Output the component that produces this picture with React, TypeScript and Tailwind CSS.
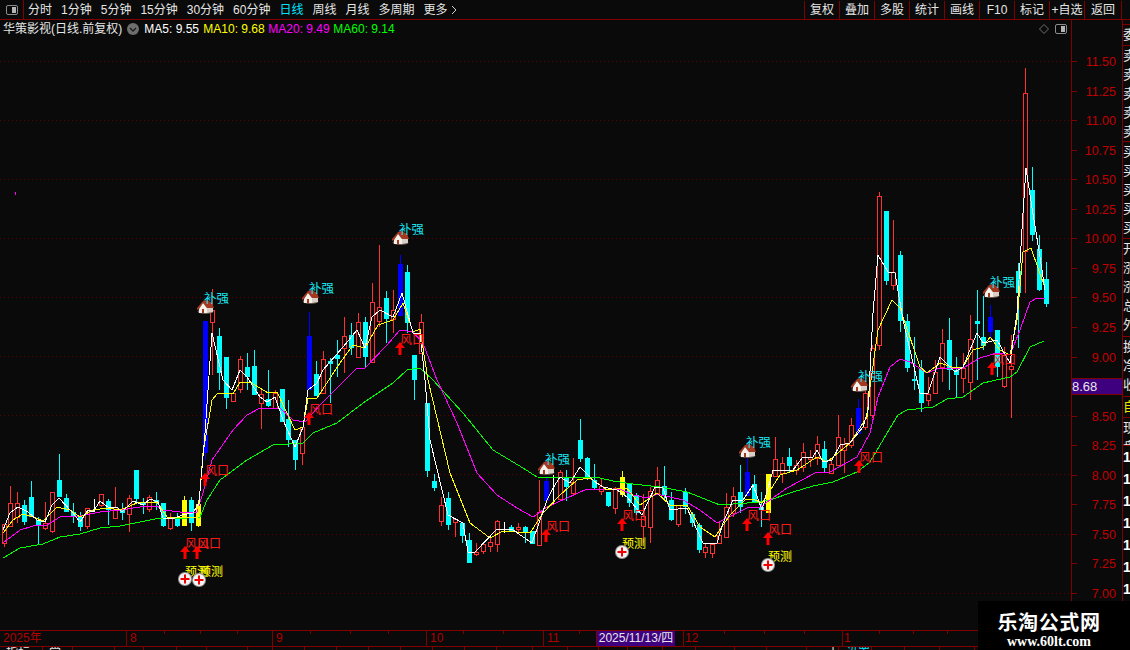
type Kind = "r" | "c" | "b" | "y" | "w"

// high, body top, body bottom, low (page pixels), one row per trading day
const candles: [number, number, number, number, Kind][] = [
  [524, 524, 543, 547, "r"], [486, 503, 526, 527, "r"], [492, 503, 517, 523, "r"], [500, 505, 522, 525, "c"],
  [481, 497, 517, 517, "c"], [517, 520, 526, 544, "c"], [502, 523, 528, 530, "r"], [492, 492, 531, 533, "r"],
  [454, 480, 497, 497, "c"], [494, 498, 512, 512, "c"], [503, 512, 517, 523, "c"], [512, 517, 527, 531, "c"],
  [508, 508, 526, 529, "r"], [499, 510, 511, 512, "w"], [494, 494, 505, 507, "r"], [499, 501, 510, 525, "c"],
  [487, 507, 518, 518, "r"], [503, 510, 513, 520, "c"], [495, 498, 514, 532, "r"], [470, 470, 499, 503, "c"],
  [498, 503, 505, 514, "c"], [495, 497, 509, 512, "r"], [492, 500, 503, 510, "c"], [503, 503, 526, 527, "c"],
  [513, 518, 528, 530, "r"], [513, 517, 526, 527, "c"], [496, 500, 526, 526, "y"], [497, 500, 523, 531, "c"],
  [500, 504, 526, 527, "y"], [321, 321, 453, 460, "b"], [289, 310, 322, 375, "r"], [328, 336, 373, 390, "c"],
  [357, 357, 398, 409, "c"], [393, 393, 401, 401, "r"], [356, 359, 389, 393, "r"], [353, 367, 377, 390, "c"],
  [350, 366, 395, 395, "c"], [390, 394, 403, 429, "r"], [370, 399, 406, 407, "c"], [390, 393, 408, 408, "r"],
  [389, 389, 422, 422, "c"], [400, 419, 440, 447, "c"], [440, 440, 460, 470, "c"], [427, 427, 453, 465, "r"],
  [312, 336, 390, 390, "b"], [361, 374, 396, 396, "c"], [351, 359, 393, 393, "r"], [358, 361, 364, 403, "c"],
  [340, 355, 359, 377, "c"], [317, 336, 348, 373, "r"], [323, 335, 348, 355, "c"], [313, 322, 357, 357, "r"],
  [317, 322, 357, 368, "c"], [283, 302, 362, 362, "r"], [245, 307, 321, 327, "r"], [291, 298, 319, 343, "c"],
  [290, 310, 319, 333, "r"], [255, 264, 316, 316, "b"], [265, 272, 323, 333, "c"], [355, 355, 380, 400, "c"],
  [314, 322, 353, 353, "r"], [403, 403, 471, 477, "c"], [474, 481, 488, 491, "c"], [497, 505, 521, 526, "r"],
  [492, 498, 525, 530, "c"], [518, 519, 522, 537, "r"], [523, 523, 536, 543, "c"], [533, 540, 563, 563, "c"],
  [543, 552, 554, 556, "r"], [544, 544, 551, 554, "r"], [538, 542, 546, 552, "r"], [520, 521, 544, 552, "r"],
  [522, 530, 531, 533, "w"], [525, 527, 531, 532, "c"], [523, 527, 529, 533, "r"], [526, 527, 533, 543, "c"],
  [531, 531, 544, 544, "c"], [480, 512, 545, 545, "r"], [478, 481, 501, 501, "b"], [475, 500, 501, 505, "w"],
  [470, 472, 499, 500, "r"], [470, 478, 487, 501, "c"], [458, 482, 493, 495, "r"], [419, 440, 459, 462, "c"],
  [457, 458, 478, 480, "c"], [464, 480, 488, 489, "c"], [478, 486, 491, 495, "r"], [492, 492, 506, 507, "c"],
  [487, 488, 508, 514, "r"], [471, 477, 495, 497, "y"], [483, 483, 503, 507, "c"], [493, 495, 513, 515, "c"],
  [494, 516, 526, 543, "r"], [487, 491, 527, 543, "r"], [467, 480, 493, 495, "r"], [466, 486, 495, 500, "c"],
  [492, 500, 520, 521, "c"], [505, 505, 524, 527, "r"], [488, 492, 507, 514, "c"], [512, 514, 523, 527, "c"],
  [523, 525, 550, 553, "c"], [543, 547, 552, 558, "r"], [544, 544, 553, 558, "r"], [522, 535, 543, 543, "r"],
  [493, 507, 537, 537, "r"], [487, 496, 513, 517, "r"], [465, 492, 507, 513, "c"], [458, 472, 496, 496, "b"],
  [475, 484, 502, 502, "c"], [492, 507, 510, 527, "c"], [474, 474, 513, 513, "y"], [437, 459, 476, 476, "r"],
  [457, 463, 473, 483, "r"], [448, 457, 466, 473, "c"], [460, 465, 470, 475, "r"], [443, 452, 467, 472, "r"],
  [450, 457, 459, 467, "r"], [436, 444, 458, 465, "r"], [441, 449, 468, 473, "c"], [458, 464, 473, 473, "r"],
  [415, 437, 465, 465, "r"], [438, 444, 450, 473, "r"], [418, 425, 445, 448, "r"], [399, 408, 434, 434, "b"],
  [388, 393, 427, 430, "r"], [345, 348, 415, 418, "r"], [192, 196, 345, 350, "r"], [211, 211, 281, 285, "c"],
  [220, 272, 285, 290, "r"], [251, 255, 321, 332, "c"], [314, 321, 368, 372, "c"], [337, 379, 381, 390, "c"],
  [360, 369, 403, 412, "c"], [377, 394, 400, 406, "r"], [360, 372, 393, 393, "r"], [329, 343, 367, 382, "r"],
  [318, 340, 370, 390, "c"], [357, 370, 375, 397, "c"], [353, 368, 378, 393, "r"], [315, 339, 382, 400, "r"],
  [290, 321, 324, 380, "c"], [296, 337, 346, 350, "c"], [305, 317, 332, 337, "b"], [330, 330, 367, 377, "c"],
  [347, 355, 386, 388, "r"], [335, 366, 369, 418, "r"], [263, 271, 293, 348, "c"], [68, 93, 251, 293, "r"],
  [167, 190, 235, 241, "c"], [235, 249, 290, 291, "c"], [262, 279, 304, 307, "c"],
]

const ma60 =
  "3,558 20,548 43,544 60,537 80,534 100,528 120,526 140,522 160,518 187,518 200,517 207,500 220,480 247,460 273,445 303,443 313,433 337,423 363,403 393,383 407,370 420,368 433,380 463,413 493,450 523,468 537,477 600,478 613,481 633,484 660,487 687,492 720,505 760,502 770,500 793,492 813,486 833,482 857,472 870,462 883,440 898,415 907,410 933,407 947,399 963,397 983,383 1010,377 1017,372 1030,347 1044,341"
const ma20 =
  "3,543 20,530 33,526 47,525 60,517 80,516 100,512 120,510 140,507 157,506 163,510 180,512 197,512 203,493 212,460 233,430 247,415 260,408 280,408 293,420 305,422 320,405 343,382 357,368 365,368 387,345 400,330 413,332 423,343 437,380 457,423 477,473 497,495 517,508 533,517 547,507 567,498 587,489 603,489 620,489 633,495 647,498 657,494 683,500 700,510 717,523 733,515 747,508 760,507 770,500 787,488 817,472 830,472 857,457 870,433 878,397 890,367 900,359 910,362 927,373 940,368 963,368 980,358 997,353 1010,355 1020,330 1030,302 1037,298 1045,299"
const ma10 =
  "3,533 13,520 23,514 33,517 43,521 57,507 70,510 80,517 93,510 107,508 120,510 137,503 157,502 167,517 180,517 198,517 203,453 212,400 218,393 233,394 240,382 250,382 268,393 277,392 295,430 303,427 308,398 317,398 340,363 353,345 365,348 378,325 393,320 403,303 413,332 420,329 428,380 450,473 470,523 490,538 503,531 530,533 543,513 560,495 577,480 590,478 607,490 627,488 640,505 657,493 670,505 687,505 700,527 715,537 730,515 745,500 753,499 762,503 780,475 797,470 817,457 827,462 850,443 867,417 870,387 878,330 892,300 900,308 920,367 927,373 940,363 955,368 963,367 973,350 983,347 990,337 1000,350 1010,355 1017,320 1023,252 1031,248 1045,288"
const ma5 =
  "3,530 10,513 18,507 28,512 37,520 45,522 52,505 59,498 72,512 80,522 88,510 93,512 100,501 108,507 117,507 122,512 133,501 143,505 150,499 158,502 163,518 175,518 182,515 193,513 199,503 205,433 212,333 223,380 232,390 240,370 247,377 260,397 267,402 275,397 283,420 295,447 303,427 308,390 317,383 323,370 343,347 357,330 365,348 372,317 380,310 393,317 402,293 413,333 420,333 425,380 430,440 448,515 463,523 468,552 475,552 497,529 513,530 532,543 547,500 553,488 560,477 570,483 580,467 595,482 603,487 617,490 627,497 642,515 655,487 663,488 670,510 687,508 703,543 717,543 723,523 733,500 743,500 753,485 762,510 773,470 793,470 803,457 813,457 817,450 823,462 832,460 840,445 850,443 863,427 868,410 873,313 878,255 888,272 895,273 903,320 920,393 928,393 940,357 955,372 963,367 977,333 983,343 997,340 1010,363 1017,313 1023,213 1026,168 1030,195 1040,257 1045,290"

const grid = [61, 120, 179, 238, 297, 356, 415, 474, 534, 593]
const prices = ["11.50", "11.25", "11.00", "10.75", "10.50", "10.25", "10.00", "9.75", "9.50", "9.25", "9.00", "8.75", "8.50", "8.25", "8.00", "7.75", "7.50", "7.25", "7.00"]

const houses = [[204, 299], [309, 289], [399, 230], [545, 460], [746, 443], [858, 377], [990, 283]]
const winds = [[185, 544], [197, 544], [205, 471], [309, 410], [400, 340], [546, 527], [622, 516], [747, 516], [768, 530], [859, 458], [992, 360]]
const forecasts = [[185, 572, 579], [199, 572, 580], [622, 544, 552], [768, 557, 565]]

const candleColor: Record<Kind, string> = { r: "#ff3030", c: "#00ffff", b: "#0000ff", y: "#ffff00", w: "#ffffff" }

function Candle({ i, d }: { i: number; d: [number, number, number, number, Kind] }) {
  const [high, top, bot, low, kind] = d
  const x = Math.round(3.5 + 6.95 * i)
  const color = candleColor[kind]
  if (kind === "r") {
    return (
      <g stroke={color} fill="none">
        <line x1={x + 0.5} x2={x + 0.5} y1={high} y2={top} />
        <line x1={x + 0.5} x2={x + 0.5} y1={bot} y2={low} />
        <rect x={x - 1.5} y={top + 0.5} width={4} height={Math.max(bot - top, 1)} />
      </g>
    )
  }
  return (
    <g>
      <line x1={x + 0.5} x2={x + 0.5} y1={high} y2={low} stroke={color} />
      {kind !== "w" && <rect x={x - 2} y={top} width={5} height={Math.max(bot - top, 2)} fill={color} />}
    </g>
  )
}

function House({ x, y }: { x: number; y: number }) {
  return (
    <g transform={`translate(${x - 8} ${y - 7})`}>
      <ellipse cx="8.5" cy="11.5" rx="8" ry="2.5" fill="#6b5a50" />
      <polygon points="0,8 6,1 10,0 15,3 17,8 10,8 6,3 2,9 0,10" fill="#a5381f" />
      <polygon points="2,9 6,3 10,8 10,13 2,13" fill="#f5f0ea" />
      <polygon points="10,8 16,8 16,12 10,13" fill="#d9cfc4" />
      <rect x="5" y="9" width="2" height="4" fill="#a5381f" />
    </g>
  )
}

function Plus({ x, y }: { x: number; y: number }) {
  return (
    <g>
      <circle cx={x} cy={y} r="7" fill="#9a9a9a" />
      <circle cx={x} cy={y} r="6" fill="#f4f4f4" />
      <rect x={x - 4.5} y={y - 1} width="9" height="2" fill="#f00000" />
      <rect x={x - 1} y={y - 4.5} width="2" height="9" fill="#f00000" />
    </g>
  )
}

function Arrow({ x, y }: { x: number; y: number }) {
  return <polygon points={`${x},${y} ${x + 5},${y + 6} ${x + 1.5},${y + 6} ${x + 1.5},${y + 13} ${x - 1.5},${y + 13} ${x - 1.5},${y + 6} ${x - 5},${y + 6}`} fill="#ff0000" />
}

function PanelIcon() {
  return (
    <svg width="12" height="10" viewBox="0 0 12 10">
      <rect x="0.5" y="0.5" width="11" height="9" rx="1.5" fill="none" stroke="#8c8c8c" />
      <rect x="6" y="2" width="4" height="6" fill="#b4b4b4" />
    </svg>
  )
}

function Chart() {
  return (
    <svg width="1071" height="610" viewBox="0 20 1071 610" className="block">
      {grid.map((y) => (
        <line key={y} x1="0" x2="1071" y1={y + 0.5} y2={y + 0.5} stroke="#5c0000" strokeDasharray="1 3" />
      ))}
      <rect x="15" y="192" width="1" height="3" fill="#ff00ff" />
      <g shapeRendering="crispEdges">
        {candles.map((d, i) => (
          <Candle key={i} i={i} d={d} />
        ))}
        <polyline points={ma60} fill="none" stroke="#00ff00" />
        <polyline points={ma20} fill="none" stroke="#ff00ff" />
        <polyline points={ma10} fill="none" stroke="#ffff00" />
        <polyline points={ma5} fill="none" stroke="#ffffff" />
      </g>
      {winds.map(([x, y]) => (
        <g key={`${x}-${y}`}>
          <text x={x} y={y + 4} fontSize="12" fill="#ff1a1a">风口</text>
          <Arrow x={x} y={y + 2} />
        </g>
      ))}
      {houses.map(([x, y]) => (
        <g key={x}>
          <House x={x + 1} y={y + 8} />
          <text x={x} y={y + 4} fontSize="12.5" fill="#19e6f0">补强</text>
        </g>
      ))}
      {forecasts.map(([x, ty, cy]) => (
        <g key={x}>
          <text x={x} y={ty + 4} fontSize="12" fill="#ffff00">预测</text>
          <Plus x={x} y={cy} />
        </g>
      ))}
    </svg>
  )
}

function Axis() {
  return (
    <svg width="50" height="610" viewBox="1072 20 50 610" className="block">
      {prices.map((p, i) => {
        const y = Math.round(61 + 29.55 * i)
        return (
          <g key={p}>
            <line x1="1072" x2="1077" y1={y + 0.5} y2={y + 0.5} stroke="#800000" />
            <text x="1116" y={y + 5} textAnchor="end" fontSize="12.5" fill="#c00000">{p}</text>
          </g>
        )
      })}
    </svg>
  )
}

const navItems = ["分时", "1分钟", "5分钟", "15分钟", "30分钟", "60分钟", "日线", "周线", "月线", "多周期", "更多"]
const toolButtons = ["复权", "叠加", "多股", "统计", "画线", "F10", "标记", "+自选"]

const stripSections: { h: string; rows: string[]; color?: string }[] = [
  { h: "h-[21px]", rows: ["委"] },
  { h: "h-[96px]", rows: ["卖", "卖", "卖", "卖", "卖"] },
  { h: "h-[97px]", rows: ["买", "买", "买", "买", "买"] },
  { h: "h-[98px]", rows: ["开", "涨", "涨", "总", "外"] },
  { h: "h-[60px]", rows: ["换", "净", "收"] },
  { h: "h-[21px]", rows: ["自"], color: "text-[#e6e600]" },
  { h: "h-[28px]", rows: ["现", "盘"] },
]

const monthCells = [
  { w: "w-[127px]", label: "2025年" },
  { w: "w-[146px]", label: "8" },
  { w: "w-[154px]", label: "9" },
  { w: "w-[117px]", label: "10" },
  { w: "w-[53px]", label: "11" },
]
const axisTicks = [164, 200, 237, 310, 350, 388, 463, 503, 579, 724, 764, 804, 879, 913, 947]

// right edge of each cut-off tab along the very bottom of the window
const footerEdges = [43, 73, 115, 144, 177, 207, 248, 273, 305, 337, 369, 401, 433, 465, 497, 533, 568, 599, 628, 663, 696, 735, 767, 807, 839, 872, 905, 940, 975]

export default function App() {
  return (
    <div className="relative flex h-[650px] w-[1130px] flex-col overflow-hidden bg-[#0a0a0a] font-['Liberation_Sans','Noto_Sans_CJK_SC',sans-serif] text-[12px] text-[#e6e6e6]">
      {/* top toolbar */}
      <div className="flex h-[20px] shrink-0 items-center border-b border-[#800000] pt-px leading-[19px]">
        <div className="-mt-px flex h-[19px] w-[24px] items-center justify-center border-r border-[#800000]">
          <PanelIcon />
        </div>
        <div className="ml-[4px] flex gap-[9px]">
          {navItems.map((item) => (
            <span key={item} className={item === "日线" ? "text-[#00e5ff]" : ""}>{item}</span>
          ))}
        </div>
        <svg width="6" height="10" viewBox="0 0 6 10" className="ml-[3px]">
          <path d="M1 1l4 4-4 4" fill="none" stroke="#d0d0d0" />
        </svg>
        <div className="-mt-px mr-[8px] ml-auto flex h-[19px] pt-px">
          {toolButtons.map((b) => (
            <div key={b} className="flex w-[35px] items-center justify-center border-l border-[#800000] whitespace-nowrap">{b}</div>
          ))}
          <div className="flex w-[38px] items-center justify-center border-x border-[#800000]">返回</div>
        </div>
      </div>

      {/* chart, price axis, quote strip */}
      <div className="flex h-[610px] shrink-0">
        <div className="relative w-[1071px]">
          <Chart />
          <div className="absolute inset-x-0 top-0 flex h-[18px] items-center pl-[3px] whitespace-nowrap">
            <span>华策影视(日线.前复权)</span>
            <span className="ml-[5px] flex h-[12px] w-[12px] items-center justify-center rounded-full bg-[#6e6e6e]">
              <svg width="8" height="5" viewBox="0 0 8 5">
                <path d="M1 1l3 3 3-3" fill="none" stroke="#1a1a1a" strokeWidth="1.3" />
              </svg>
            </span>
            <span className="ml-[5px] w-[59px] text-white">MA5: 9.55</span>
            <span className="w-[65px] text-[#ffff00]">MA10: 9.68</span>
            <span className="w-[65px] text-[#ff00ff]">MA20: 9.49</span>
            <span className="text-[#00ff00]">MA60: 9.14</span>
            <span className="mr-[4px] ml-auto flex items-center gap-[6px]">
              <svg width="10" height="10" viewBox="0 0 10 10">
                <path d="M5 0.5L9.5 5 5 9.5 0.5 5z" fill="none" stroke="#6e6e6e" />
              </svg>
              <PanelIcon />
            </span>
          </div>
        </div>
        <div className="relative w-[51px] border-l border-[#800000]">
          <Axis />
          <div className="absolute inset-x-0 top-[358px] flex h-[17px] items-center border-y border-[#800000] bg-[#3f0080] text-[13px] text-[#e6e6e6]">8.68</div>
        </div>
        <div className="w-[8px] overflow-hidden border-l border-[#800000] leading-[19px] whitespace-nowrap">
          <div className="h-[5px] border-b border-[#800000]" />
          {stripSections.map((s, i) => (
            <div key={i} className={`${s.h} overflow-hidden border-b border-[#800000] ${s.color ?? ""}`}>
              {s.rows.map((r, j) => (
                <div key={j} className="h-[19px] text-[13px]">{r}</div>
              ))}
            </div>
          ))}
          {[0, 1, 2, 3, 4, 5, 6, 7].map((n) => (
            <div key={n} className="h-[22px] text-[14px] leading-[22px] font-bold text-white">1</div>
          ))}
        </div>
      </div>

      {/* date axis */}
      <div className="relative flex h-[17px] shrink-0 border-y border-[#800000] leading-[15px] text-[#b00000]">
        {monthCells.map((c) => (
          <div key={c.label} className={`${c.w} border-r border-[#800000] pl-[3px]`}>{c.label}</div>
        ))}
        <div className="w-[78px] bg-[#3f0080] text-center whitespace-nowrap text-[#e6e6e6]">2025/11/13/四</div>
        <div className="w-[9px] border-r border-[#800000]" />
        <div className="w-[159px] border-r border-[#800000] pl-[1px]">12</div>
        <div className="pl-[1px]">1</div>
        {axisTicks.map((x) => (
          <span key={x} className="absolute top-0 h-[3px] w-px bg-[#800000]" style={{ left: x }} />
        ))}
      </div>

      {/* bottom tabs, cut off by the window */}
      <div className="flex min-h-0 flex-1 overflow-hidden text-[12px] leading-[12px]">
        {footerEdges.map((edge, i) => (
          <div key={edge} className="shrink-0 border-r border-[#800000] pl-[6px]" style={{ width: edge - (footerEdges[i - 1] ?? 0) }}>
            {i === 0 && "指标"}
            {i === 1 && "常"}
            {i === 24 && <span className="pl-[14px]">十</span>}
            {i === 25 && <span className="pl-[1px] text-[#00e5ff]">设置</span>}
          </div>
        ))}
      </div>

      {/* watermark */}
      <div className="absolute right-0 bottom-0 flex h-[49px] w-[152px] flex-col items-center overflow-hidden bg-black pt-[9px] pr-[10px] text-white">
        <span className="font-['Noto_Sans_CJK_SC',sans-serif] text-[20px] leading-[24px] font-bold tracking-[0.6px]">乐淘公式网</span>
        <span className="font-['Liberation_Serif',serif] text-[14px] leading-[16px] font-bold">www.60lt.com</span>
      </div>
    </div>
  )
}
